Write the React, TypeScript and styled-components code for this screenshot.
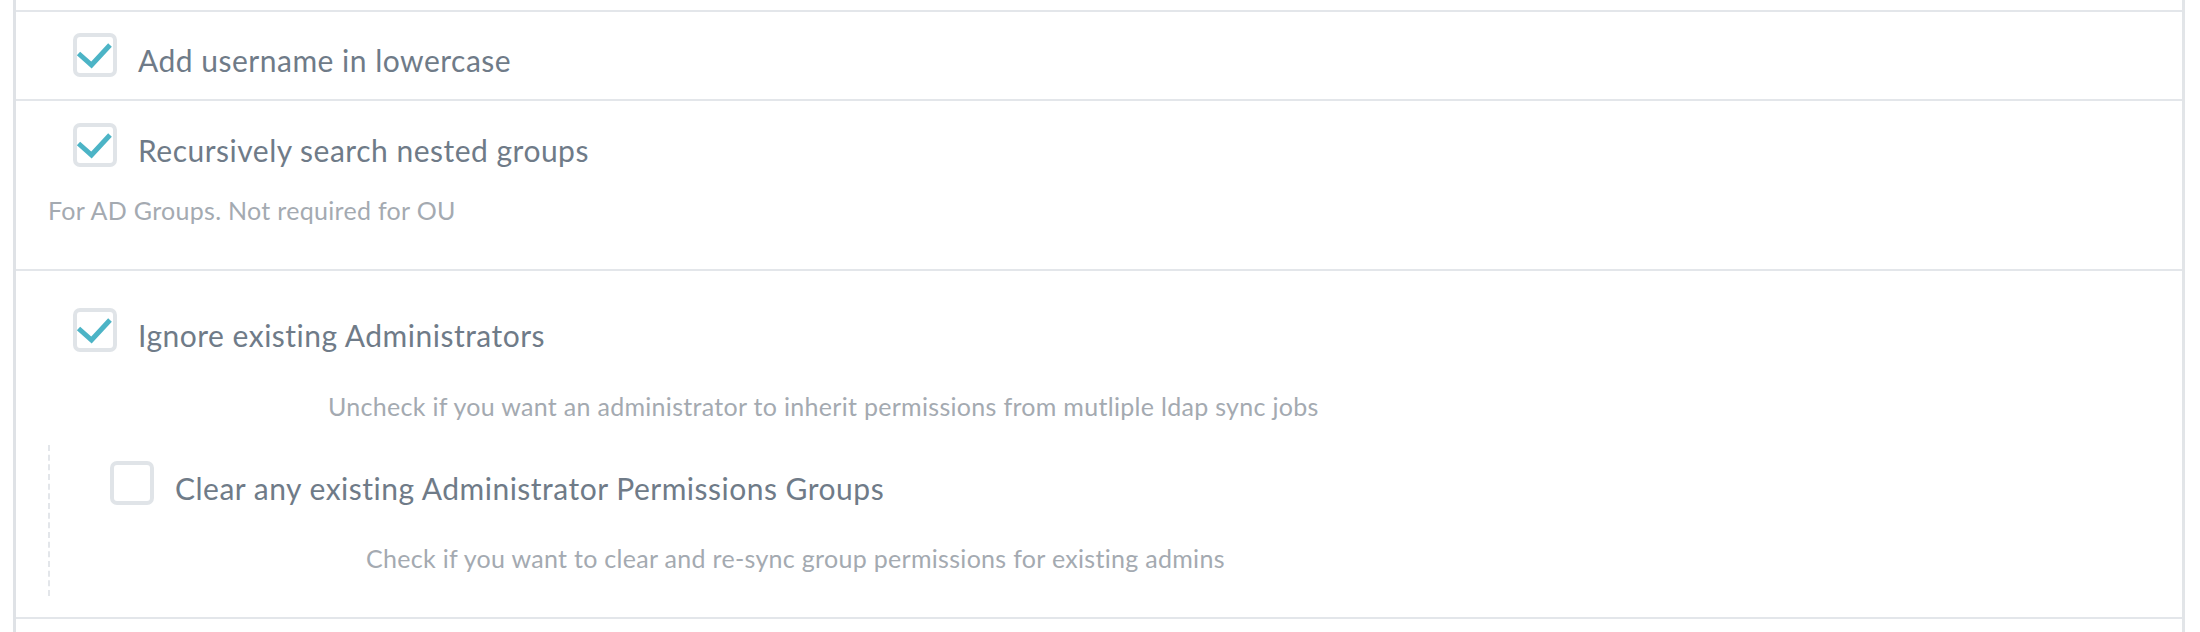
import React from "react";
import styled, { createGlobalStyle } from "styled-components";

const GlobalStyle = createGlobalStyle`
  html, body {
    margin: 0;
    padding: 0;
    background: #fff;
  }
  body {
    font-family: Lato, "Open Sans", sans-serif;
  }
`;

const Panel = styled.div`
  margin-left: 13px;
  width: 2172px;
  min-height: 100vh;
  box-sizing: border-box;
  border-left: 3px solid #dfe2e6;
  border-right: 3px solid #e2e5e8;
  padding-top: 10px;
`;

const Row = styled.div<{ $top?: number; $bottom?: number }>`
  border-top: 2px solid #e3e6ea;
  padding: ${(p) => p.$top ?? 21}px 0 ${(p) => p.$bottom ?? 22}px 32px;
`;

const Nested = styled.div`
  margin-top: 27px;
  border-left: 2px dashed #e3e6ea;
  padding: 16px 0 26px 60px;
`;

const CheckLine = styled.label<{ $indent?: number }>`
  display: flex;
  align-items: flex-start;
  gap: 21px;
  margin-left: ${(p) => p.$indent ?? 25}px;
  cursor: pointer;
`;

const Box = styled.span`
  position: relative;
  flex: none;
  width: 44px;
  height: 44px;
  box-sizing: border-box;
  border: 4px solid #e0e4e8;
  border-radius: 7px;
  background: #fff;

  svg {
    position: absolute;
    left: -4px;
    top: -4px;
    overflow: visible;
  }
`;

const Label = styled.span`
  font-size: 30px;
  letter-spacing: 0.5px;
  line-height: 34px;
  padding-top: 10px;
  color: #6f7b88;
  white-space: nowrap;
`;

const Help = styled.div<{ $indent?: number; $gap?: number }>`
  font-size: 25px;
  letter-spacing: 0.3px;
  line-height: 24px;
  color: #a4aab1;
  margin-top: ${(p) => p.$gap ?? 31}px;
  padding-left: ${(p) => p.$indent ?? 0}px;
  white-space: nowrap;
`;

const Tick = () => (
  <svg width="44" height="44" viewBox="0 0 44 44">
    <polyline
      points="5.5,20.5 18.5,32 37,12"
      fill="none"
      stroke="#4cb4c6"
      strokeWidth="5"
    />
  </svg>
);

const Checkbox = ({
  checked,
  label,
  indent,
}: {
  checked: boolean;
  label: string;
  indent?: number;
}) => (
  <CheckLine $indent={indent}>
    <Box>{checked && <Tick />}</Box>
    <Label>{label}</Label>
  </CheckLine>
);

export default function App() {
  return (
    <>
      <GlobalStyle />
      <Panel>
        <Row>
          <Checkbox checked label="Add username in lowercase" />
        </Row>
        <Row $top={22} $bottom={47}>
          <Checkbox checked label="Recursively search nested groups" />
          <Help>For AD Groups. Not required for OU</Help>
        </Row>
        <Row $top={37} $bottom={21}>
          <Checkbox checked label="Ignore existing Administrators" />
          <Help $indent={280} $gap={42}>
            Uncheck if you want an administrator to inherit permissions from mutliple ldap sync jobs
          </Help>
          <Nested>
            <Checkbox
              checked={false}
              indent={0}
              label="Clear any existing Administrator Permissions Groups"
            />
            <Help $indent={256} $gap={41}>
              Check if you want to clear and re-sync group permissions for existing admins
            </Help>
          </Nested>
        </Row>
        <Row $top={0} $bottom={0} />
      </Panel>
    </>
  );
}
